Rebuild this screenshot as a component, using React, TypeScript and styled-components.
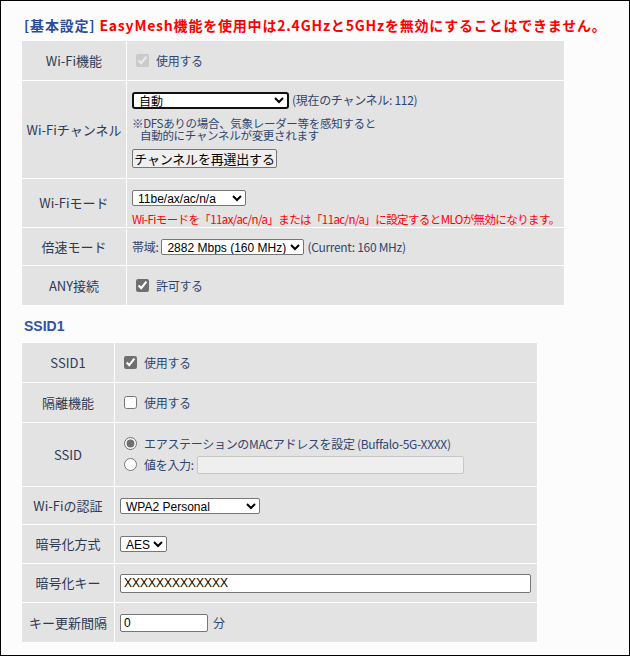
import React from 'react';
import styled, { createGlobalStyle } from 'styled-components';

const GlobalStyle = createGlobalStyle`
  html, body {
    margin: 0;
    padding: 0;
    background: #fff;
  }
  body {
    font-family: "Noto Sans CJK JP", "Liberation Sans", sans-serif;
  }
`;

const Page = styled.div`
  box-sizing: border-box;
  width: 630px;
  height: 656px;
  border: 1px solid #000;
  background: #fcfcfc;
  padding: 14px 0 0 20px;
  overflow: hidden;
`;

const Title = styled.div`
  font-size: 14px;
  line-height: 20px;
  font-weight: bold;
  letter-spacing: 0.8px;
  white-space: nowrap;
  margin: 0 0 5px 3px;
  color: #ff0000;
`;

const TitleTag = styled.span`
  color: #2c4c9c;
  margin-right: 4px;
`;

const SectionTitle = styled.div`
  font-family: "Liberation Sans", "Noto Sans CJK JP", sans-serif;
  font-size: 14px;
  line-height: 20px;
  font-weight: bold;
  color: #3050a8;
  margin: 10px 0 6px 3px;
`;

const Table = styled.table<{ w: number }>`
  width: ${props => props.w}px;
  table-layout: fixed;
  border-collapse: separate;
  border-spacing: 1px;
  background: #fff;
`;

const Row = styled.tr<{ h: number }>`
  height: ${props => props.h}px;
`;

const Label = styled.td`
  background: #e3e3e3;
  color: #2f3a55;
  font-size: 13px;
  line-height: 16px;
  text-align: center;
  vertical-align: middle;
  padding: 0;
  white-space: nowrap;
`;

const Cell = styled.td<{ pt?: number }>`
  background: #e3e3e3;
  color: #30466f;
  font-size: 12px;
  line-height: 16px;
  letter-spacing: -0.3px;
  vertical-align: middle;
  padding: ${props => props.pt || 0}px 5px 0;
  white-space: nowrap;
`;

const Line = styled.div<{ mt?: number }>`
  display: flex;
  align-items: center;
  gap: 3px;
  ${props => (props.mt && `margin-top: ${props.mt}px;`)}
`;

const Check = styled.input`
  width: 13px;
  height: 13px;
  margin: 0 4px 0 4px;
  accent-color: #6f6f6f;
`;

const Select = styled.select<{ w: number; focused?: boolean }>`
  box-sizing: border-box;
  width: ${props => props.w}px;
  height: ${props => (props.focused ? 17 : 16)}px;
  font-family: "Liberation Sans", "Noto Sans CJK JP", sans-serif;
  font-size: 12px;
  line-height: 14px;
  letter-spacing: 0;
  color: #000;
  background: #fff;
  padding: 0 0 0 1px;
  margin: 0;
  border: ${props => (props.focused ? '2px solid #111' : '1px solid #767676')};
  border-radius: ${props => (props.focused ? 3 : 2)}px;
`;

const Note = styled.div`
  margin-top: 8px;
  font-size: 11.5px;
  line-height: 12px;
`;

const Indent = styled.span`
  padding-left: 8px;
`;

const Warn = styled.div`
  margin-top: 6px;
  font-size: 11.5px;
  line-height: 14px;
  letter-spacing: -0.6px;
  color: #ff0000;
`;

const Button = styled.button`
  display: block;
  margin-top: 8px;
  height: 19px;
  width: 145px;
  padding: 0;
  font-family: "Noto Sans CJK JP", sans-serif;
  font-size: 13px;
  line-height: 17px;
  letter-spacing: -0.2px;
  color: #000;
  background: #efefef;
  border: 1px solid #767676;
  border-radius: 2px;
`;

const TextInput = styled.input<{ w: number; h: number }>`
  box-sizing: border-box;
  width: ${props => props.w}px;
  height: ${props => props.h}px;
  margin: 0;
  padding: 0 3px;
  font-family: "Liberation Sans", sans-serif;
  font-size: 12px;
  letter-spacing: 0;
  color: #000;
  background: #fff;
  border: 1px solid #767676;
  border-radius: 2px;

  &:disabled {
    background: #efefef;
    border-color: #c8c8c8;
  }
`;

const Unit = styled.span`
  margin-left: 2px;
`;

export default function App() {
  return (
    <>
      <GlobalStyle />
      <Page>
        <Title>
          <TitleTag>[基本設定]</TitleTag>
          EasyMesh機能を使用中は2.4GHzと5GHzを無効にすることはできません。
        </Title>

        <Table w={544}>
          <colgroup>
            <col style={{ width: 104 }} />
            <col />
          </colgroup>
          <tbody>
            <Row h={39}>
              <Label>Wi-Fi機能</Label>
              <Cell>
                <Line>
                  <Check type="checkbox" checked disabled readOnly />
                  使用する
                </Line>
              </Cell>
            </Row>
            <Row h={97}>
              <Label>Wi-Fiチャンネル</Label>
              <Cell>
                <Line>
                  <Select w={157} focused defaultValue="auto">
                    <option value="auto">自動</option>
                  </Select>
                  (現在のチャンネル: 112)
                </Line>
                <Note>
                  ※DFSありの場合、気象レーダー等を感知すると
                  <br />
                  <Indent>自動的にチャンネルが変更されます</Indent>
                </Note>
                <Button>チャンネルを再選出する</Button>
              </Cell>
            </Row>
            <Row h={48}>
              <Label>Wi-Fiモード</Label>
              <Cell pt={9}>
                <Line>
                  <Select w={114} defaultValue="be">
                    <option value="be">11be/ax/ac/n/a</option>
                  </Select>
                </Line>
                <Warn>Wi-Fiモードを「11ax/ac/n/a」または「11ac/n/a」に設定するとMLOが無効になります。</Warn>
              </Cell>
            </Row>
            <Row h={37}>
              <Label>倍速モード</Label>
              <Cell>
                <Line>
                  帯域:
                  <Select w={143} defaultValue="2882">
                    <option value="2882">2882 Mbps (160 MHz)</option>
                  </Select>
                  (Current: 160 MHz)
                </Line>
              </Cell>
            </Row>
            <Row h={39}>
              <Label>ANY接続</Label>
              <Cell>
                <Line>
                  <Check type="checkbox" checked readOnly />
                  許可する
                </Line>
              </Cell>
            </Row>
          </tbody>
        </Table>

        <SectionTitle>SSID1</SectionTitle>

        <Table w={517}>
          <colgroup>
            <col style={{ width: 92 }} />
            <col />
          </colgroup>
          <tbody>
            <Row h={39}>
              <Label>SSID1</Label>
              <Cell>
                <Line>
                  <Check type="checkbox" checked readOnly />
                  使用する
                </Line>
              </Cell>
            </Row>
            <Row h={39}>
              <Label>隔離機能</Label>
              <Cell>
                <Line>
                  <Check type="checkbox" readOnly />
                  使用する
                </Line>
              </Cell>
            </Row>
            <Row h={63}>
              <Label>SSID</Label>
              <Cell>
                <Line>
                  <Check type="radio" name="ssid" checked readOnly />
                  エアステーションのMACアドレスを設定 (Buffalo-5G-XXXX)
                </Line>
                <Line mt={4}>
                  <Check type="radio" name="ssid" readOnly />
                  値を入力:
                  <TextInput w={267} h={18} disabled />
                </Line>
              </Cell>
            </Row>
            <Row h={37}>
              <Label>Wi-Fiの認証</Label>
              <Cell>
                <Line>
                  <Select w={140} defaultValue="wpa2">
                    <option value="wpa2">WPA2 Personal</option>
                  </Select>
                </Line>
              </Cell>
            </Row>
            <Row h={38}>
              <Label>暗号化方式</Label>
              <Cell>
                <Line>
                  <Select w={47} defaultValue="aes">
                    <option value="aes">AES</option>
                  </Select>
                </Line>
              </Cell>
            </Row>
            <Row h={38}>
              <Label>暗号化キー</Label>
              <Cell>
                <Line>
                  <TextInput w={411} h={19} defaultValue="XXXXXXXXXXXXX" />
                </Line>
              </Cell>
            </Row>
            <Row h={39}>
              <Label>キー更新間隔</Label>
              <Cell>
                <Line>
                  <TextInput w={88} h={18} defaultValue="0" />
                  <Unit>分</Unit>
                </Line>
              </Cell>
            </Row>
          </tbody>
        </Table>
      </Page>
    </>
  );
}
